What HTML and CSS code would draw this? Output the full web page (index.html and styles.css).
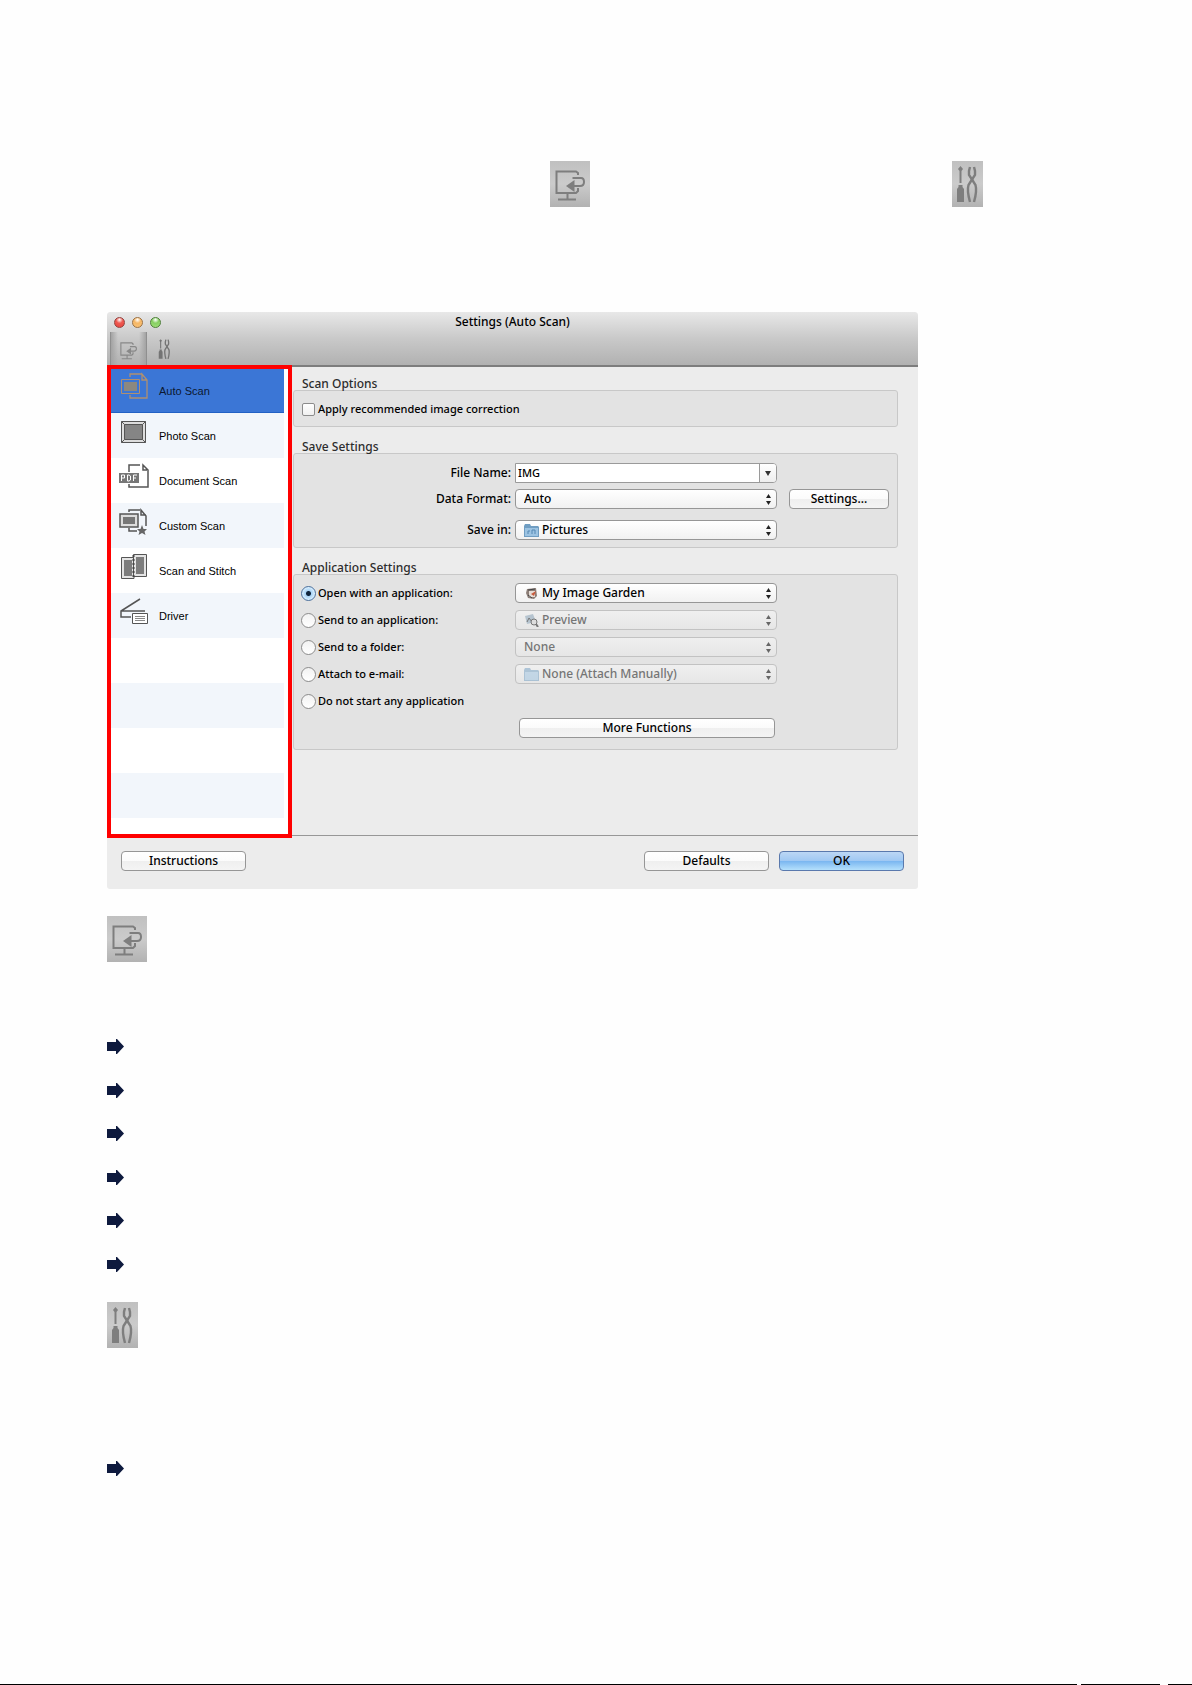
FILE: index.html
```html
<!DOCTYPE html>
<html lang="en">
<head>
<meta charset="utf-8">
<title>Settings (Auto Scan)</title>
<link rel="stylesheet" href="styles.css">
</head>
<body>
<svg class="defs" aria-hidden="true">
  <symbol id="scan" viewBox="0 0 40 46">
    <g fill="none" stroke="currentColor" stroke-width="2">
      <path d="M28 14V12L26 10.500H6.500V32H26L28 30V27"/>
      <path d="M22.500 17H31Q34 17 34 21Q34 25 30 25H23"/>
      <path d="M17.500 32V38M8 38.500H26"/>
    </g>
    <path d="M16 25L24.500 19V31Z" fill="currentColor"/>
  </symbol>
  <symbol id="tools" viewBox="0 0 31 46">
    <path d="M8.500 5L11 8L9.500 10V22H7.500V10L6 8Z M6.500 24H10.500V26L12 28V41H5V28L6.500 26Z" fill="currentColor"/>
    <g fill="none" stroke="currentColor" stroke-width="2.400">
      <path d="M18 6L17 10V14L20 18.500L23.500 24C25 29 24 34 22 41"/>
      <path d="M22 6L23 10V14L20 18.500L16.500 24C15 29 16 34 18 41"/>
    </g>
  </symbol>
  <symbol id="arrow" viewBox="0 0 17 15">
    <path d="M0 3H9V0H10L17 7.500L10 15H9V12H0Z" fill="#0e1a3e"/>
  </symbol>
  <symbol id="updown" viewBox="0 0 5 11">
    <path d="M2.500 0L5 4H0ZM2.500 11L0 7H5Z" fill="currentColor"/>
  </symbol>
  <symbol id="folder" viewBox="0 0 15 13">
    <path d="M0 2L1 0H6L7 2H14L15 3V13H0Z" fill="#6f9dc2"/>
    <path d="M1 4H14V12H1Z" fill="#9cc3e2"/>
  </symbol>
</svg>

<main class="page">
  <div class="intro">
    <svg class="tile tile-scan" role="img" aria-label="Scan"><use href="#scan"/></svg>
    <svg class="tile tile-tools" role="img" aria-label="General"><use href="#tools"/></svg>
  </div>

  <div class="window">
    <header class="toolbar">
      <div class="titlebar">
        <div class="lights"><i class="light red"></i><i class="light amber"></i><i class="light green"></i></div>
        <h1 class="title">Settings (Auto Scan)</h1>
      </div>
      <div class="tabs">
        <button class="tab tab-on" aria-label="Scan tab"><svg width="23" height="26"><use href="#scan"/></svg></button>
        <button class="tab" aria-label="General tab"><svg width="17" height="26"><use href="#tools"/></svg></button>
      </div>
    </header>

    <div class="content">
      <ul class="sidebar">
        <li class="item selected">
          <svg class="item-icon" viewBox="0 0 30 37"><g fill="none" stroke="currentColor"><path d="M11 5V2H23M11 23V26H28V8L23 2V8H28" stroke-width="1.300"/><path d="M2.500 7.500H20.500V21.500H2.500Z" fill="#3b76d6"/></g><path d="M5 10H18V19H5Z" fill="#8b8880"/></svg>
          <span>Auto Scan</span></li>
        <li class="item">
          <svg class="item-icon" viewBox="0 0 30 37"><g stroke="#555"><path d="M2.500 4.500H26.500V25.500H2.500Z" fill="#ddd"/><path d="M5.500 7.500H23.500V22.500H5.500Z" fill="#858585"/></g><path d="M2.500 4.500L5.500 7.500M26.500 4.500L23.500 7.500M2.500 25.500L5.500 22.500M26.500 25.500L23.500 22.500" stroke="#555"/></svg>
          <span>Photo Scan</span></li>
        <li class="item">
          <svg class="item-icon" viewBox="0 0 30 37"><path d="M10 10V3H21M10 22V25H29V9M24 3L29 8H24Z" fill="none" stroke="#555" stroke-width="1.500"/><rect x="0" y="11" width="20" height="10" fill="#777"/><path d="M2.500 19V13H5.500V16H2.500M8.500 13H10L11.500 14V18L10 19H8.500ZM14.500 19V13H18M14.500 16H17" fill="none" stroke="#fff"/></svg>
          <span>Document Scan</span></li>
        <li class="item">
          <svg class="item-icon" viewBox="0 0 30 37"><g fill="none" stroke="#555" stroke-width="1.500"><path d="M10 5V3H21M10 21V24H18M27 19V9L22 3V8H27"/><path d="M1 7H19V20H1Z" fill="#ddd"/></g><path d="M4 10H16V17H4Z" fill="#777"/><path d="M23 18L24.500 22H28L25.500 24.500L26.500 28L23 26L19.500 28L20.500 24.500L18 22H21.500Z" fill="#666"/></svg>
          <span>Custom Scan</span></li>
        <li class="item">
          <svg class="item-icon" viewBox="0 0 30 37"><g stroke="#555" fill="#e4e4e4"><path d="M2.500 5.500H15V26.500H2.500Z"/><path d="M14.500 2.500H27.500V24.500H14.500Z"/></g><path d="M5 8H13V24H5ZM17 5H25V22H17Z" fill="#7d7d7d"/><path d="M14.500 3V26" stroke="#444" stroke-width="2" stroke-dasharray="2 2"/></svg>
          <span>Scan and Stitch</span></li>
        <li class="item">
          <svg class="item-icon" viewBox="0 0 30 37"><path d="M21 2L2 14V20H12M2 14H26" fill="none" stroke="#555" stroke-width="1.500"/><path d="M13.500 16.500H28.500V26.500H13.500Z" fill="#fff" stroke="#555"/><path d="M16 19.500H26M16 21.500H26M16 23.500H26" stroke="#888"/></svg>
          <span>Driver</span></li>
        <li class="item"></li>
        <li class="item"></li>
        <li class="item"></li>
        <li class="item"></li>
      </ul>

      <form class="panel">
        <section>
          <h2 class="group-title">Scan Options</h2>
          <div class="group options">
            <label class="choice"><input class="check" type="checkbox">Apply recommended image correction</label>
          </div>
        </section>

        <section>
          <h2 class="group-title">Save Settings</h2>
          <div class="group save">
            <label class="field-label" for="file">File Name:</label>
            <div class="combo">
              <input id="file" class="combo-text" type="text" value="IMG">
              <button class="combo-button" type="button" aria-label="Show names"><svg width="6" height="5"><path d="M0 0H6L3 5Z" fill="#333"/></svg></button>
            </div>
            <label class="field-label" for="format">Data Format:</label>
            <div class="popup">
              <select id="format"><option>Auto</option></select>
              <svg class="updown"><use href="#updown"/></svg>
            </div>
            <button class="button" type="button">Settings...</button>
            <label class="field-label last" for="savein">Save in:</label>
            <div class="popup with-icon last">
              <select id="savein"><option>Pictures</option></select>
              <svg class="popup-icon"><use href="#folder"/><path d="M4 10V7H6M8 10V6H11V10" fill="none" stroke="#5488b4"/></svg>
              <svg class="updown"><use href="#updown"/></svg>
            </div>
          </div>
        </section>

        <section>
          <h2 class="group-title">Application Settings</h2>
          <div class="group apps">
            <label class="choice"><input class="radio" type="radio" name="app" checked>Open with an application:</label>
            <div class="popup with-icon">
              <select aria-label="Application to open with"><option>My Image Garden</option></select>
              <svg class="popup-icon" viewBox="0 0 15 13"><path d="M3 2L12 1L13 9L10 12L4 11L2 6Z" fill="#8d7f78"/><path d="M5 4H11V10H5Z" fill="#e6ddd6"/><path d="M7 7L12 4L10 9Z" fill="#c85a3c"/><path d="M4 8L8 11M4 3L11 2" stroke="#444"/></svg>
              <svg class="updown"><use href="#updown"/></svg>
            </div>
            <label class="choice"><input class="radio" type="radio" name="app">Send to an application:</label>
            <div class="popup with-icon">
              <select disabled aria-label="Application to send to"><option>Preview</option></select>
              <svg class="popup-icon" viewBox="0 0 15 13"><path d="M1 2L9 0L12 8L3 10Z" fill="#b6c4cf"/><path d="M3 8L5 4L8 8" fill="none" stroke="#777"/><circle cx="10" cy="8" r="3" fill="#ddd" stroke="#777"/><path d="M12 10L14 13" stroke="#777" stroke-width="2"/></svg>
              <svg class="updown"><use href="#updown"/></svg>
            </div>
            <label class="choice"><input class="radio" type="radio" name="app">Send to a folder:</label>
            <div class="popup">
              <select disabled aria-label="Folder to send to"><option>None</option></select>
              <svg class="updown"><use href="#updown"/></svg>
            </div>
            <label class="choice"><input class="radio" type="radio" name="app">Attach to e-mail:</label>
            <div class="popup with-icon">
              <select disabled aria-label="E-mail program"><option>None (Attach Manually)</option></select>
              <svg class="popup-icon faded"><use href="#folder"/></svg>
              <svg class="updown"><use href="#updown"/></svg>
            </div>
            <label class="choice wide"><input class="radio" type="radio" name="app">Do not start any application</label>
            <button class="button more" type="button">More Functions</button>
          </div>
        </section>
      </form>
    </div>

    <footer class="actions">
      <button class="button">Instructions</button>
      <button class="button push">Defaults</button>
      <button class="button primary">OK</button>
    </footer>
  </div>

  <svg class="tile tile-scan after-window" role="img" aria-label="Scan"><use href="#scan"/></svg>
  <ul class="links">
    <li><svg><use href="#arrow"/></svg></li>
    <li><svg><use href="#arrow"/></svg></li>
    <li><svg><use href="#arrow"/></svg></li>
    <li><svg><use href="#arrow"/></svg></li>
    <li><svg><use href="#arrow"/></svg></li>
    <li><svg><use href="#arrow"/></svg></li>
  </ul>
  <svg class="tile tile-tools" role="img" aria-label="General"><use href="#tools"/></svg>
  <ul class="links single">
    <li><svg><use href="#arrow"/></svg></li>
  </ul>
</main>
<div class="rule"><i></i><i></i><i></i></div>
</body>
</html>
```
FILE: styles.css
```css
* { box-sizing: border-box; }

body {
  margin: 0;
  min-height: 100vh;
  display: flex;
  flex-direction: column;
  justify-content: space-between;
  background: #fefefe;
  color: #000;
  font: 500 11px/14px "Noto Sans", "Open Sans", sans-serif;
}

h1, h2, ul { margin: 0; padding: 0; font: inherit; list-style: none; }
svg { display: block; flex: none; }
button, input, select { margin: 0; font: inherit; color: inherit; }
.defs { position: absolute; width: 0; height: 0; }

.page { padding: 161px 107px 0; }

.intro { display: flex; gap: 362px; padding-left: 443px; margin-bottom: 105px; }
.tile { height: 46px; background: linear-gradient(#c0c0c0, #cbcbcb 50%, #b2b2b2); color: #7e7e7e; }
.tile-scan { width: 40px; }
.tile-tools { width: 31px; }
.after-window { margin: 27px 0 77px; }

.links { display: flex; flex-direction: column; justify-content: space-between; height: 233px; margin-bottom: 30px; }
.links svg { width: 17px; height: 15px; }
.single { height: 15px; margin: 113px 0 0; }

.window { max-width: 811px; background: #ececec; border-radius: 4px 4px 3px 3px; overflow: hidden; }

.toolbar { height: 53px; background: linear-gradient(#e8e8e8, #c9c9c9 50%, #b1b1b1); }
.titlebar { display: grid; grid-template-columns: 1fr auto 1fr; align-items: center; height: 20px; }
.lights { display: flex; gap: 7px; padding-left: 7px; }
.light { width: 11px; height: 11px; border-radius: 50%; border: 1px solid; }
.red { background: radial-gradient(circle at 50% 20%, #fff, #ee5a52 40%, #e8423c); border-color: #93423e; }
.amber { background: radial-gradient(circle at 50% 20%, #fff, #f6b765 40%, #f9c47a); border-color: #9c7040; }
.green { background: radial-gradient(circle at 50% 20%, #fff, #86cf62 40%, #a4e37c); border-color: #4d7f38; }
.title { font-size: 12px; }
.tabs { display: flex; height: 33px; padding-left: 3px; gap: 9px; color: #8a8a8a; }
.tab { display: flex; align-items: center; justify-content: center; padding: 0; border: 0; background: none; color: #747474; }
.tab-on { width: 37px; padding-top: 2px; border: solid #8f8f8f; border-width: 0 1px; background: linear-gradient(90deg, #a3a3a3, transparent 20%, transparent 80%, #a3a3a3); color: #888; }

.content { display: grid; grid-template-columns: 185px 1fr; }

.sidebar { height: 473px; padding-right: 4px; border: 4px solid #f00; background: #fff; overflow: hidden; font: 11px/14px "Liberation Sans", Arial, sans-serif; }
.item { display: flex; align-items: center; gap: 10px; height: 45px; padding-left: 8px; }
.item:nth-child(even) { background: #f2f6fb; }
.item.selected { height: 44px; background: #3b76d6; border-bottom: 1px solid #2261c4; color: #0c1830; }
.item-icon { width: 30px; height: 37px; }
.selected .item-icon { color: #b09070; }

.panel { display: flex; flex-direction: column; gap: 12px; margin-bottom: 2px; padding: 9px 20px 0 1px; border-top: 2px solid #7d7d7d; border-bottom: 1px solid #979797; }
.group-title { padding: 1px 0 0 9px; font-size: 12px; line-height: 13px; color: #2c2c2c; }
.group { border: 1px solid #c8c8c8; border-radius: 3px; background: #e3e3e3; }
.options { padding: 8px 8px 7px; }
.choice { display: flex; align-items: center; gap: 3px; height: 20px; white-space: nowrap; }
.check { appearance: none; width: 13px; height: 13px; border: 1px solid #8c8c8c; border-radius: 2px; background: linear-gradient(#fff, #f0f0f0); }
.radio { appearance: none; width: 15px; height: 15px; border: 1px solid #8c8c8c; border-radius: 50%; background: linear-gradient(#f2f2f2, #fff); }
.radio:checked { border-color: #4a6f9c; background: radial-gradient(circle, #10243c 2px, #a9d3f5 3px, #d5ecfd 6px); }

.save { display: grid; grid-template-columns: 217px 262px 100px; column-gap: 4px; row-gap: 6px; padding: 9px 0 7px; }
.save .button { margin-left: 8px; width: 100px; }
.field-label { grid-column: 1; font-size: 12px; line-height: 19px; text-align: right; }
.last { margin-top: 5px; }

.apps { display: grid; grid-template-columns: 214px 262px; row-gap: 7px; padding: 8px 0 11px 7px; }
.apps .choice { gap: 2px; }
.wide { grid-column: 1 / -1; }
.more { grid-column: 2; width: 256px; margin: 0 4px; }

.combo { display: flex; height: 20px; border: 1px solid #9a9a9a; border-radius: 0 4px 4px 0; background: #fff; overflow: hidden; }
.combo-text { flex: 1; min-width: 0; padding: 0 2px; border: 0; background: none; }
.combo-button { display: flex; align-items: center; justify-content: center; width: 17px; padding: 0; border: 0; border-left: 1px solid #9a9a9a; background: linear-gradient(#fff, #eee); }

.popup { display: grid; align-items: center; height: 20px; }
.popup > * { grid-area: 1 / 1; }
.popup select { appearance: none; width: 100%; height: 20px; padding: 0 20px 0 8px; border: 1px solid #969696; border-radius: 4px; background: linear-gradient(#fff, #f1f1f1); font-size: 12px; }
.popup select:disabled { border-color: #c2c2c2; background: linear-gradient(#efefef, #e6e6e6); color: #757575; opacity: 1; }
.popup.with-icon select { padding-left: 26px; }
.popup-icon { width: 15px; height: 13px; margin-left: 9px; pointer-events: none; }
.faded { opacity: 0.5; }
.updown { width: 5px; height: 11px; margin-right: 6px; justify-self: end; color: #222; pointer-events: none; }
select:disabled ~ .updown { color: #666; }

.button { height: 20px; padding: 0; border: 1px solid #969696; border-radius: 4px; background: linear-gradient(#fff, #fbfbfb 50%, #efefef 50%, #f4f4f4); font-size: 12px; line-height: 16px; }
.primary { border-color: #5a79ad; background: linear-gradient(#bcd7f5, #9fc8f3 50%, #79b5f0 50%, #b4e0fc); }

.actions { display: flex; gap: 10px; padding: 13px 14px 18px; }
.actions .button { width: 125px; }
.actions .push { margin-left: auto; }

.rule { display: flex; gap: 4px; }
.rule i { height: 1px; background: #000; }
.rule i:nth-child(1) { flex: 1077; }
.rule i:nth-child(2) { flex: 79; }
.rule i:nth-child(3) { flex: 24; margin-left: 4px; }
```
